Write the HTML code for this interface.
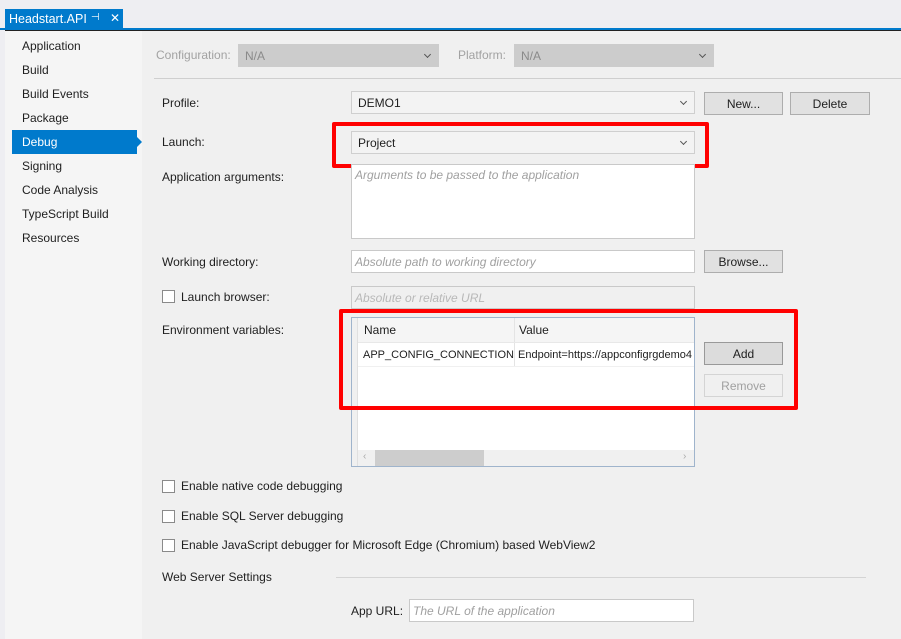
<!DOCTYPE html>
<html><head><meta charset="utf-8"><style>
*{box-sizing:border-box;margin:0;padding:0}
body{width:901px;height:639px;overflow:hidden;background:#eeeef2;font-family:"Liberation Sans",sans-serif;font-size:12px;color:#1e1e1e;position:relative}
.a{position:absolute}
.tab{left:5px;top:9px;width:118px;height:20px;background:#007acc;color:#fff;font-size:12.5px;padding:3px 0 0 4px;white-space:nowrap}
.lbl{position:absolute;font-size:12px;color:#1e1e1e;white-space:nowrap}
.dd{position:absolute;background:#f3f3f3;border:1px solid #cfcfcf;height:23px;padding:4px 0 0 6px}
.dd:after{content:"";position:absolute;right:8px;top:7px;width:4px;height:4px;border-right:1px solid #555;border-bottom:1px solid #555;transform:rotate(45deg)}
.btn{position:absolute;background:#e1e1e1;border:1px solid #adadad;height:23px;text-align:center;padding-top:4px}
.inp{position:absolute;background:#fff;border:1px solid #c9c9c9;height:23px;padding:4px 0 0 3px;color:#a0a0a0;font-style:italic;white-space:nowrap;overflow:hidden}
.red{position:absolute;border:4px solid #f00;border-radius:2px}
.cb{position:absolute;width:13px;height:13px;border:1px solid #8a8a8a;background:#fff}
</style></head><body>
<div class="a tab">Headstart.API<span style="position:absolute;left:86px;top:3px;font-size:10px">⊣</span><span style="position:absolute;left:105px;top:2px;font-size:12px">✕</span></div>
<div class="a" style="left:0;top:28px;width:901px;height:2px;background:#007acc"></div>
<div class="a" style="left:5px;top:30px;width:896px;height:1px;background:#222"></div>
<div class="a" style="left:5px;top:31px;width:896px;height:608px;background:#f0f0f0"></div>
<div class="a" style="left:5px;top:31px;width:137px;height:608px;background:#f5f5f5"></div>
<div class="a" style="left:12px;top:130px;width:125px;height:24px;background:#007acc"></div>
<div class="a" style="left:137px;top:137px;width:0;height:0;border-top:5px solid transparent;border-bottom:5px solid transparent;border-left:5px solid #007acc"></div>
<div class="lbl" style="left:22px;top:39px">Application</div>
<div class="lbl" style="left:22px;top:63px">Build</div>
<div class="lbl" style="left:22px;top:87px">Build Events</div>
<div class="lbl" style="left:22px;top:111px">Package</div>
<div class="lbl" style="left:22px;top:135px;color:#fff">Debug</div>
<div class="lbl" style="left:22px;top:159px">Signing</div>
<div class="lbl" style="left:22px;top:183px">Code Analysis</div>
<div class="lbl" style="left:22px;top:207px">TypeScript Build</div>
<div class="lbl" style="left:22px;top:231px">Resources</div>

<div class="lbl" style="left:156px;top:48px;color:#a2a2a2">Configuration:</div>
<div class="dd" style="left:238px;top:44px;width:201px;background:#cccccc;border-color:#cccccc;color:#8a8a8a">N/A</div>
<div class="lbl" style="left:458px;top:48px;color:#a2a2a2">Platform:</div>
<div class="dd" style="left:514px;top:44px;width:200px;background:#cccccc;border-color:#cccccc;color:#8a8a8a">N/A</div>
<div class="a" style="left:154px;top:78px;width:747px;height:1px;background:#cfcfcf"></div>

<div class="lbl" style="left:162px;top:96px">Profile:</div>
<div class="dd" style="left:351px;top:91px;width:344px">DEMO1</div>
<div class="btn" style="left:704px;top:92px;width:79px">New...</div>
<div class="btn" style="left:790px;top:92px;width:80px">Delete</div>

<div class="lbl" style="left:162px;top:135px">Launch:</div>
<div class="dd" style="left:351px;top:131px;width:344px">Project</div>
<div class="red" style="left:332px;top:122px;width:377px;height:46px"></div>

<div class="lbl" style="left:162px;top:170px">Application arguments:</div>
<div class="inp" style="left:351px;top:164px;width:344px;height:75px;padding-top:3px">Arguments to be passed to the application</div>

<div class="lbl" style="left:162px;top:255px">Working directory:</div>
<div class="inp" style="left:351px;top:250px;width:344px">Absolute path to working directory</div>
<div class="btn" style="left:704px;top:250px;width:79px">Browse...</div>

<div class="cb" style="left:162px;top:290px"></div>
<div class="lbl" style="left:181px;top:290px">Launch browser:</div>
<div class="inp" style="left:351px;top:286px;width:344px;background:#f0f0f0;color:#b8b8b8">Absolute or relative URL</div>

<div class="lbl" style="left:162px;top:323px">Environment variables:</div>
<div class="a" style="left:351px;top:317px;width:344px;height:150px;background:#fff;border:1px solid #9fb4cc;overflow:hidden">
 <div class="a" style="left:0;top:0;width:342px;height:24px;background:#f5f5f5"></div>
 <div class="a" style="left:0;top:0;width:6px;height:150px;background:#f0f0f0;border-right:1px solid #e0e0e0"></div>
 <div class="a" style="left:162px;top:0;width:1px;height:48px;background:#e4e4e4"></div>
 <div class="lbl" style="left:12px;top:5px">Name</div>
 <div class="lbl" style="left:167px;top:5px">Value</div>
 <div class="a" style="left:6px;top:24px;width:340px;height:1px;background:#e8e8e8"></div>
 <div class="lbl" style="left:11px;top:31px;font-size:11px">APP_CONFIG_CONNECTION</div>
 <div class="lbl" style="left:166px;top:31px;font-size:11px">Endpoint=https://appconfigrgdemo4</div>
 <div class="a" style="left:6px;top:48px;width:340px;height:1px;background:#f0f0f0"></div>
 <div class="a" style="left:6px;top:132px;width:336px;height:16px;background:#f0f0f0"></div>
 <div class="a" style="left:23px;top:132px;width:109px;height:16px;background:#cdcdcd"></div>
 <div class="lbl" style="left:11px;top:133px;color:#aaa;font-size:10px">‹</div>
 <div class="lbl" style="left:331px;top:133px;color:#aaa;font-size:10px">›</div>
</div>
<div class="btn" style="left:704px;top:342px;width:79px;background:#dcdcdc;border-color:#999">Add</div>
<div class="btn" style="left:704px;top:374px;width:79px;background:#f0f0f0;border-color:#d4d4d4;color:#a0a0a0">Remove</div>
<div class="red" style="left:339px;top:309px;width:459px;height:101px"></div>

<div class="cb" style="left:162px;top:480px"></div>
<div class="lbl" style="left:181px;top:479px">Enable native code debugging</div>
<div class="cb" style="left:162px;top:510px"></div>
<div class="lbl" style="left:181px;top:509px">Enable SQL Server debugging</div>
<div class="cb" style="left:162px;top:539px"></div>
<div class="lbl" style="left:181px;top:538px">Enable JavaScript debugger for Microsoft Edge (Chromium) based WebView2</div>

<div class="lbl" style="left:162px;top:570px">Web Server Settings</div>
<div class="a" style="left:336px;top:577px;width:530px;height:1px;background:#d4d4d4"></div>
<div class="lbl" style="left:351px;top:604px">App URL:</div>
<div class="inp" style="left:409px;top:599px;width:285px">The URL of the application</div>
</body></html>
